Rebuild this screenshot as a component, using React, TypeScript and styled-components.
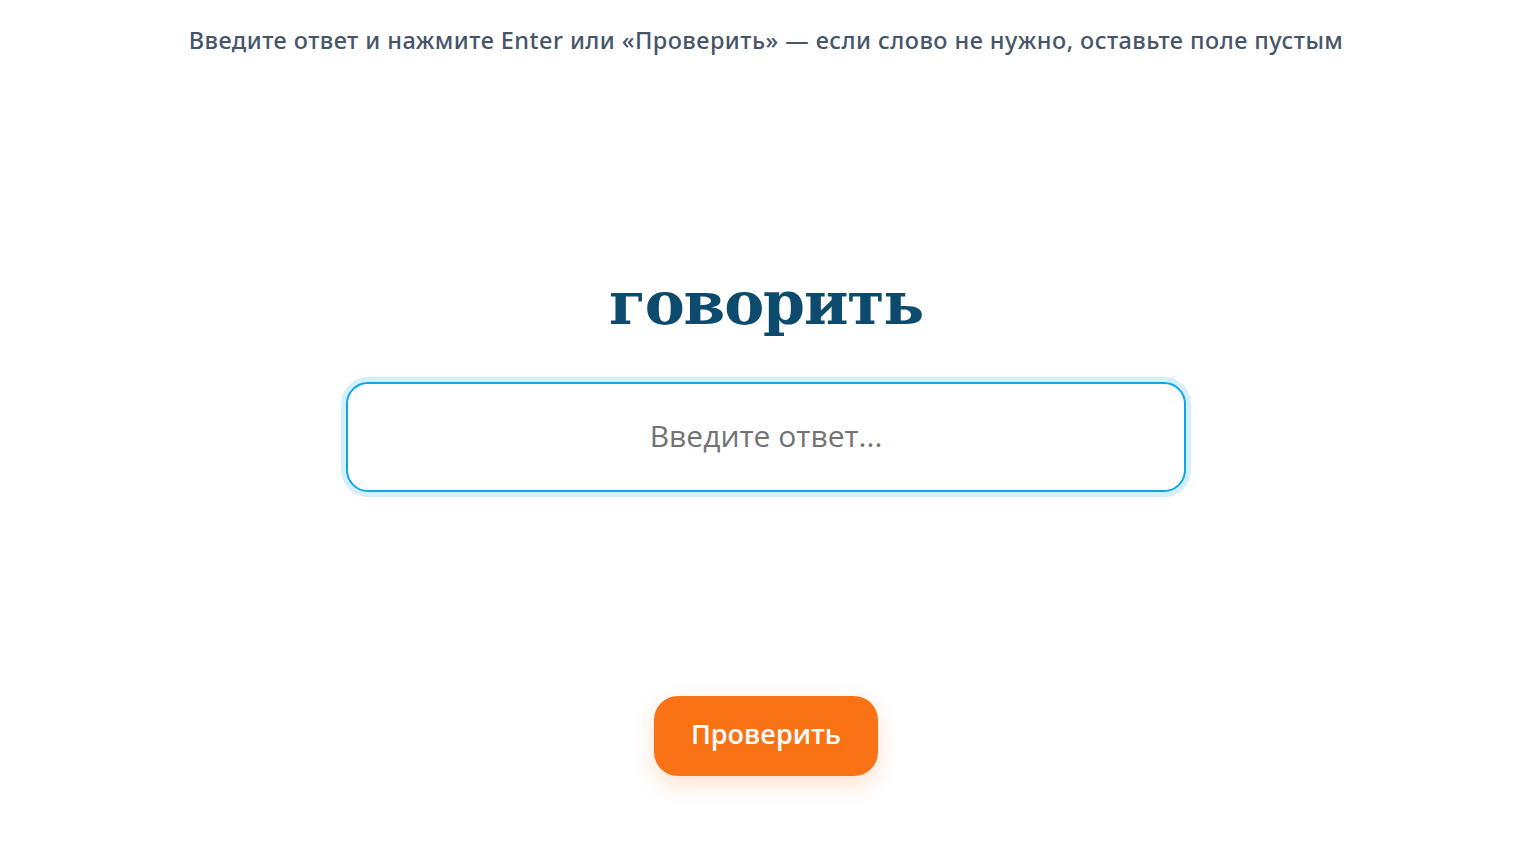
import React from 'react';
import styled, { createGlobalStyle } from 'styled-components';

const GlobalStyle = createGlobalStyle`
  html, body {
    margin: 0;
    padding: 0;
    background: #ffffff;
  }
  body {
    font-family: "Open Sans", "Noto Sans", sans-serif;
  }
`;

const Page = styled.div`
  width: 1532px;
  height: 848px;
  display: flex;
  flex-direction: column;
  align-items: center;
  box-sizing: border-box;
`;

const Hint = styled.p`
  margin: 24px 0 0;
  font-family: "Noto Sans", "Open Sans", sans-serif;
  font-size: 23.5px;
  font-weight: 500;
  letter-spacing: 0.45px;
  line-height: 32px;
  color: #475569;
  text-align: center;
`;

const Word = styled.h1`
  margin: 207px 0 0;
  font-family: "DejaVu Serif", "Liberation Serif", serif;
  font-size: 60px;
  font-weight: 700;
  letter-spacing: -1.1px;
  color: #0c4a6e;
  line-height: 80px;
`;

const AnswerInput = styled.input`
  margin-top: 39px;
  width: 840px;
  height: 110px;
  box-sizing: border-box;
  padding: 0 24px 4px;
  border: 2px solid #0ea5e9;
  border-radius: 22px;
  box-shadow: 0 0 0 5px #d4eefb;
  outline: none;
  text-align: center;
  font-family: "Open Sans", "Noto Sans", sans-serif;
  font-size: 30px;
  color: #1e293b;
  background: #fff;

  &::placeholder {
    color: #737373;
  }
`;

const CheckButton = styled.button`
  margin-top: 204px;
  width: 224px;
  height: 80px;
  padding: 0 0 6px;
  border: none;
  border-radius: 24px;
  background: #f97316;
  color: #ffffff;
  font-family: "Open Sans", "Noto Sans", sans-serif;
  font-size: 27px;
  font-weight: 600;
  cursor: pointer;
  box-shadow: 0 8px 22px rgba(249, 115, 22, 0.22);
`;

export default function App() {
  return (
    <>
      <GlobalStyle />
      <Page>
        <Hint>Введите ответ и нажмите Enter или «Проверить» — если слово не нужно, оставьте поле пустым</Hint>
        <Word>говорить</Word>
        <AnswerInput placeholder="Введите ответ..." />
        <CheckButton>Проверить</CheckButton>
      </Page>
    </>
  );
}
